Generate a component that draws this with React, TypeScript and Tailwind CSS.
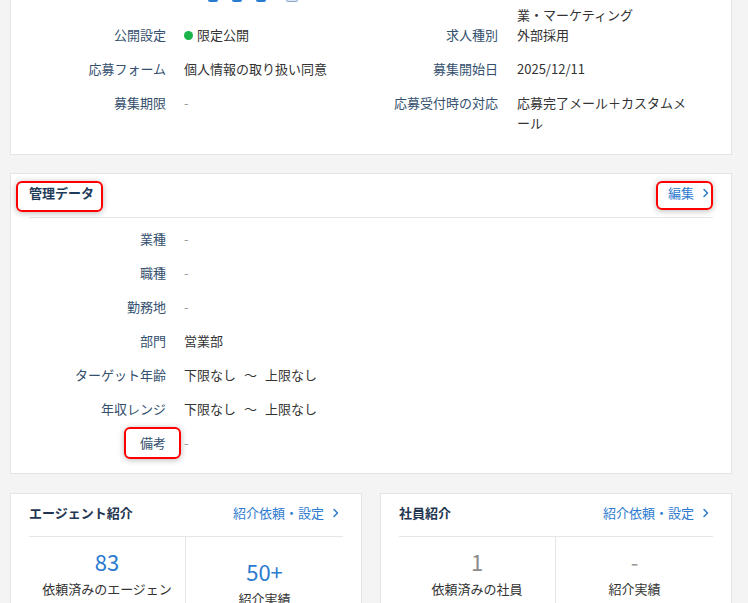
import React from "react";

function Chevron() {
  return (
    <svg width="8" height="10" viewBox="0 0 8 10" className="shrink-0">
      <path d="M2 1.5L5.5 5L2 8.5" fill="none" stroke="currentColor" strokeWidth="1.5" strokeLinecap="round" strokeLinejoin="round" />
    </svg>
  );
}

function Mark({ className }: { className: string }) {
  return (
    <span
      className={`pointer-events-none absolute rounded-[6px] border-2 border-[#ff0000] shadow-[0_1px_6px_rgba(0,0,0,0.28)] ${className}`}
    />
  );
}

function Row({
  label,
  children,
  className = "",
  valueClass = "ml-[18px]",
  labelExtra,
}: {
  label: string;
  children: React.ReactNode;
  className?: string;
  valueClass?: string;
  labelExtra?: React.ReactNode;
}) {
  return (
    <div className={`flex leading-5 ${className}`}>
      <div className="w-[137px] shrink-0 text-right text-[#34506e]">
        <span className="relative">
          {label}
          {labelExtra}
        </span>
      </div>
      <div className={`text-[#333] ${valueClass}`}>{children}</div>
    </div>
  );
}

const Dash = () => <span className="text-[#999]">-</span>;

function LinkMore({ text, mark }: { text: string; mark?: boolean }) {
  return (
    <span className="relative mr-[3px] flex items-center gap-[8px] text-[#2e7bcf]">
      {text}
      <Chevron />
      {mark && <Mark className="-left-[12px] -top-[2px] h-[29px] w-[57px]" />}
    </span>
  );
}

function Stat({
  title,
  link,
  a,
  aLabel,
  aGray,
  b,
  bLabel,
  bGray,
}: {
  title: string;
  link: string;
  a: string;
  aLabel: string;
  aGray?: boolean;
  b: string;
  bLabel: string;
  bGray?: boolean;
}) {
  return (
    <div className="flex-1 border border-[#e4e4e4] bg-white px-[18px]">
      <div className="flex items-center justify-between border-b border-[#e6e6e6] pb-[13px] pt-[9px] leading-5">
        <span className="font-bold text-[#1f3550]">{title}</span>
        <LinkMore text={link} />
      </div>
      <div className="grid grid-cols-2">
        <div className="flex flex-col items-center border-r border-[#e6e6e6] px-[10px] pb-[16px] pt-[10px] text-center">
          <div className={`text-[22px] leading-[28px] ${aGray ? "text-[#8c8c8c]" : "text-[#2b7bcf]"}`}>{a}</div>
          <div className="mt-[4px] leading-5 text-[#333]">{aLabel}</div>
        </div>
        <div className="flex flex-col items-center justify-center px-[10px] pb-[16px] pt-[10px] text-center">
          <div className={`text-[22px] leading-[28px] ${bGray ? "text-[#9a9a9a]" : "text-[#2b7bcf]"}`}>{b}</div>
          <div className="mt-[4px] leading-5 text-[#333]">{bLabel}</div>
        </div>
      </div>
    </div>
  );
}

export default function App() {
  const R = "ml-[19px] w-[175px]";
  return (
    <div className="h-[603px] w-[748px] overflow-hidden bg-[#f4f4f4] pl-[10px] pr-[16px] text-[13px] [font-family:'Noto_Sans_CJK_JP','Noto_Sans',sans-serif]">
      <div className="-mt-[54px]">
        {/* Card 1 */}
        <div className="flex border border-[#e4e4e4] bg-white px-[18px] pb-[21px] pt-[18px]">
          <div className="flex w-[332px] shrink-0 flex-col">
            <div className="h-[3px]" />
            <Row label="応募方法" className="mb-[21px]">
              <div className="ml-[24px] flex h-[36px] items-end gap-[14px] pb-[2px]">
                <span className="h-[16px] w-[10px] rounded-[2px] bg-[#2b7bcf]" />
                <span className="h-[16px] w-[10px] rounded-[2px] bg-[#2b7bcf]" />
                <span className="h-[16px] w-[10px] rounded-[2px] bg-[#2b7bcf]" />
                <span className="ml-[6px] h-[16px] w-[12px] rounded-[2px] border border-[#8aa7c8] bg-[#dbe6f2]" />
              </div>
            </Row>
            <Row label="公開設定" className="mb-[14px]">
              <span className="flex items-center">
                <span className="mr-[4px] h-[9px] w-[9px] rounded-full bg-[#1bb34a]" />
                限定公開
              </span>
            </Row>
            <Row label="応募フォーム" className="mb-[14px]">
              個人情報の取り扱い同意
            </Row>
            <Row label="募集期限">
              <Dash />
            </Row>
          </div>
          <div className="flex flex-1 flex-col">
            <Row label="職種" valueClass={R}>
              <span className="block">法人営業・セールス</span>
              <span className="block">&nbsp;</span>
              <span className="block">業・マーケティング</span>
            </Row>
            <Row label="求人種別" valueClass={R} className="mb-[14px]">
              外部採用
            </Row>
            <Row label="募集開始日" valueClass={R} className="mb-[14px]">
              2025/12/11
            </Row>
            <Row label="応募受付時の対応" valueClass={R}>
              応募完了メール＋カスタムメール
            </Row>
          </div>
        </div>

        {/* Card 2 */}
        <div className="mt-[18px] border border-[#e4e4e4] bg-white px-[18px] pb-[20px]">
          <div className="flex items-center justify-between border-b border-[#e6e6e6] pb-[14px] pt-[9px] leading-5">
            <span className="relative font-bold text-[#1f3b5a]">
              管理データ
              <Mark className="-left-[13px] -top-[2px] h-[31px] w-[87px]" />
            </span>
            <LinkMore text="編集" mark />
          </div>
          <div className="mt-[11px] flex flex-col gap-[14px]">
            <Row label="業種">
              <Dash />
            </Row>
            <Row label="職種">
              <Dash />
            </Row>
            <Row label="勤務地">
              <Dash />
            </Row>
            <Row label="部門">営業部</Row>
            <Row label="ターゲット年齢">
              下限なし<span className="mx-[8px]">〜</span>上限なし
            </Row>
            <Row label="年収レンジ">
              下限なし<span className="mx-[8px]">〜</span>上限なし
            </Row>
            <Row label="備考" labelExtra={<Mark className="-left-[16px] -top-[6px] h-[32px] w-[57px]" />}>
              <Dash />
            </Row>
          </div>
        </div>

        {/* Bottom cards */}
        <div className="mt-[19px] flex gap-[18px]">
          <Stat title="エージェント紹介" link="紹介依頼・設定" a="83" aLabel="依頼済みのエージェント" b="50+" bLabel="紹介実績" />
          <Stat title="社員紹介" link="紹介依頼・設定" a="1" aGray aLabel="依頼済みの社員" b="-" bGray bLabel="紹介実績" />
        </div>
      </div>
    </div>
  );
}
